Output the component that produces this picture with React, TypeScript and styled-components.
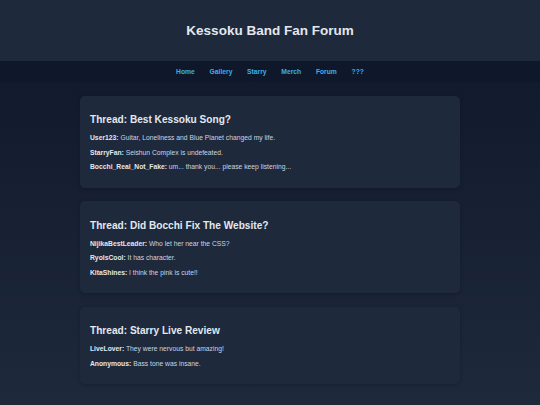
import React from "react";
import styled, { createGlobalStyle } from "styled-components";

const Global = createGlobalStyle`
  html, body {
    margin: 0;
    padding: 0;
  }
  html {
    background: #1e293b;
  }
  body {
    min-height: 100vh;
    font-family: "Liberation Sans", Arial, Helvetica, sans-serif;
    font-size: 6.75px;
    line-height: 1.15;
    color: #cbd5e1;
    background: linear-gradient(to bottom, #0f172a, #1e293b);
  }
`;

const Header = styled.header`
  background: #1e293b;
  padding: 13.5px;
  text-align: center;
`;

const Title = styled.h1`
  margin: 9px 0;
  font-size: 13.5px;
  line-height: 15.5px;
  font-weight: 700;
  color: #e2e8f0;
`;

const Nav = styled.nav`
  background: #0f172a;
  padding: 7px;
  line-height: 7.75px;
  text-align: center;
`;

const NavLink = styled.a`
  margin: 0 7.35px;
  color: #38b2ec;
  font-weight: 700;
  text-decoration: none;
`;

const Main = styled.main`
  max-width: 380px;
  margin: 0 auto;
  padding-top: 13.5px;
`;

const Thread = styled.section`
  background: #1e293b;
  border-radius: 5px;
  padding: 10px;
  margin-bottom: 13.5px;
  box-shadow: 0 1px 4px rgba(0, 0, 0, 0.2);
`;

const ThreadTitle = styled.h2`
  margin: 8.4px 0;
  font-size: 10.125px;
  line-height: 11.65px;
  font-weight: 700;
  color: #e2e8f0;
`;

const Post = styled.p`
  margin: 6.75px 0;
  line-height: 7.75px;
`;

const Author = styled.strong`
  color: #e2e8f0;
  font-weight: 700;
`;

const threads = [
  {
    title: "Thread: Best Kessoku Song?",
    posts: [
      ["User123", "Guitar, Loneliness and Blue Planet changed my life."],
      ["StarryFan", "Seishun Complex is undefeated."],
      ["Bocchi_Real_Not_Fake", "um... thank you... please keep listening..."],
    ],
  },
  {
    title: "Thread: Did Bocchi Fix The Website?",
    posts: [
      ["NijikaBestLeader", "Who let her near the CSS?"],
      ["RyoIsCool", "It has character."],
      ["KitaShines", "I think the pink is cute!!"],
    ],
  },
  {
    title: "Thread: Starry Live Review",
    posts: [
      ["LiveLover", "They were nervous but amazing!"],
      ["Anonymous", "Bass tone was insane."],
    ],
  },
];

const links = ["Home", "Gallery", "Starry", "Merch", "Forum", "???"];

export default function App() {
  return (
    <>
      <Global />
      <Header>
        <Title>Kessoku Band Fan Forum</Title>
      </Header>
      <Nav>
        {links.map((l) => (
          <NavLink key={l} href="#">
            {l}
          </NavLink>
        ))}
      </Nav>
      <Main>
        {threads.map((t) => (
          <Thread key={t.title}>
            <ThreadTitle>{t.title}</ThreadTitle>
            {t.posts.map(([a, m]) => (
              <Post key={a}>
                <Author>{a}:</Author> {m}
              </Post>
            ))}
          </Thread>
        ))}
      </Main>
    </>
  );
}
